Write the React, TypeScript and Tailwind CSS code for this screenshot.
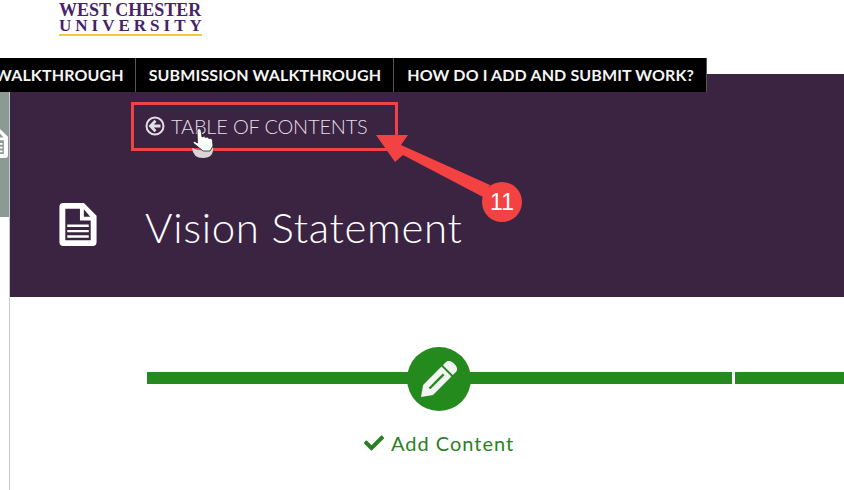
import { FaCheck } from 'react-icons/fa';

const navItems = ['WALKTHROUGH', 'SUBMISSION WALKTHROUGH', 'HOW DO I ADD AND SUBMIT WORK?'];

function DocIcon({ className }: { className?: string }) {
  return (
    <svg viewBox="0 0 38 44" className={className} fill="none">
      <path
        fillRule="evenodd"
        fill="#ffffff"
        d="M4 0H25L38 13V40Q38 44 34 44H4Q0 44 0 40V4Q0 0 4 0ZM6 6V38H32V18H21V6ZM25 6.500V14H31.500ZM8 22H30V24.500H8ZM8 27.500H30V30H8ZM8 33H30V35.500H8Z"
      />
    </svg>
  );
}

function BackIcon() {
  return (
    <svg viewBox="0 0 20 20" className="h-[20px] w-[20px] shrink-0" fill="none" stroke="currentColor">
      <circle cx="10" cy="10" r="8.500" strokeWidth="2" />
      <path d="M10.500 4.800L5.500 10L10.500 15.200M6 10H15.500" strokeWidth="2.800" />
    </svg>
  );
}

function PencilIcon() {
  return (
    <svg viewBox="0 0 36 36" className="h-[36px] w-[36px]">
      <g transform="translate(0 36) rotate(-45)">
        <path d="M0 0L10 -7H36V7H10Z" fill="#f4f4f4" />
        <path d="M38 -7H42Q47 -7 47 0Q47 7 42 7H38Z" fill="#f4f4f4" />
        <rect x="12" y="-1.200" width="20" height="2.400" fill="#258a1e" />
      </g>
    </svg>
  );
}

function Annotation() {
  return (
    <svg viewBox="0 0 844 490" className="pointer-events-none absolute inset-0 h-[490px] w-[844px]">
      <rect x="132.500" y="103.500" width="264" height="46" fill="none" stroke="#ef4347" strokeWidth="3" />
      <path d="M376 135L408 135L401 145L490 185L483 197L403 155L395 162Z" fill="#f44142" />
      <path d="M192 148Q203 153 213 147Q214 158 203 158Q193 158 192 148Z" fill="#d8d4d8" />
      <path
        fill="#ffffff"
        stroke="#222222"
        strokeWidth="0.800"
        d="M197 130Q199 127 201 130L202 137Q204 135.500 205.500 137.500Q207.500 136 209 138.500Q211 137.500 212.500 140L213 146L210 151H203L197 146L193 143Q193 141 195 141.500L197.500 143Z"
      />
    </svg>
  );
}

export default function App() {
  return (
    <div className="relative h-[490px] w-[844px] overflow-hidden bg-white font-['Lato',sans-serif]">
      <header className="h-[58px] pl-[59px] pt-[2px] font-['Liberation_Serif',serif] font-bold text-[#46246a]">
        <div className="w-[143px] border-b-2 border-[#f5c842] pb-[1px]">
          <div className="text-[18px] leading-[16px] whitespace-nowrap">WEST CHESTER</div>
          <div className="text-[17px] leading-[15px] tracking-[4px] whitespace-nowrap">UNIVERSITY</div>
        </div>
      </header>

      <nav className="relative z-10 -ml-[5px] flex h-[34px] w-fit items-center bg-black text-[16px] font-bold tracking-[0.130px] text-[#f5f5f5]">
        {navItems.map((item, i) => (
          <div
            key={item}
            className={`flex h-full items-center whitespace-nowrap border-r border-[#555555] ${i === 0 ? 'pr-[11px]' : 'pl-[13px] pr-[12px]'}`}
          >
            {item}
          </div>
        ))}
      </nav>

      <div className="-mt-[18px] flex h-[416px]">
        <aside className="flex w-[10px] flex-col border-r border-[#c9c9c9]">
          <div className="mt-[18px] h-[125px] overflow-hidden bg-[#8c9a96] pt-[36px]">
            <DocIcon className="-ml-[18px] h-[30px] w-[26px]" />
          </div>
        </aside>
        <main className="flex-1">
          <section className="flex h-[223px] flex-col bg-[#3b2342] pl-[49px] text-white">
            <div className="ml-[86px] mt-[40px] flex items-center gap-[6px] text-[20px] font-light leading-[24px] tracking-[-0.200px] text-[#e4dfe6]">
              <BackIcon />
              <span>TABLE OF CONTENTS</span>
            </div>
            <div className="mt-[59px] flex items-center gap-[48px]">
              <DocIcon className="h-[43px] w-[38px]" />
              <h1 className="pt-[6px] text-[42px] font-light leading-[48px] tracking-[0.650px]">Vision Statement</h1>
            </div>
          </section>

          <section className="relative pl-[137px] pt-[75px]">
            <div className="flex gap-[3px]">
              <div className="h-[12px] w-[585px] bg-[#258a1e]" />
              <div className="h-[12px] flex-1 bg-[#258a1e]" />
            </div>
            <div className="absolute left-[397px] top-[50px] flex h-[64px] w-[64px] items-center justify-center rounded-full bg-[#258a1e]">
              <PencilIcon />
            </div>
            <div className="ml-[217px] mt-[47px] flex items-center gap-[7px] text-[20px] leading-[24px] text-[#2a7f25]">
              <FaCheck className="h-[20px] w-[20px]" />
              <span className="tracking-[1px]">Add Content</span>
            </div>
          </section>
        </main>
      </div>

      <Annotation />
      <div className="absolute left-[482px] top-[182px] flex h-[40px] w-[40px] items-center justify-center rounded-full bg-[#f44142] font-['Liberation_Sans',sans-serif] text-[23px] text-white">
        11
      </div>
    </div>
  );
}
